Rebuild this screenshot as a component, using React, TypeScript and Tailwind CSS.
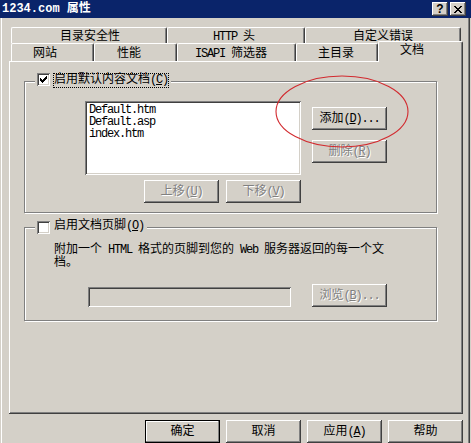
import React from 'react';

// classic win2k bevels
const raised = 'shadow-[inset_-1px_-1px_#404040,inset_1px_1px_#fff,inset_-2px_-2px_#808080,inset_2px_2px_#d4d0c8]';
const sunken = 'shadow-[inset_1px_1px_#808080,inset_-1px_-1px_#fff,inset_2px_2px_#404040,inset_-2px_-2px_#d4d0c8]';
const etched = 'border border-[#808080] shadow-[inset_1px_1px_#fff,1px_1px_#fff]';
const tabBase =
  'shrink-0 border-l border-t border-r border-white border-r-[#404040] rounded-t-[2px] shadow-[inset_-1px_0_#808080] leading-[12px] whitespace-nowrap';
const mono = "font-['Liberation_Mono',monospace] tracking-[-1.2px]";

const M = ({ children }: { children: React.ReactNode }) => <span className={mono}>{children}</span>;

const U = ({ children }: { children: React.ReactNode }) => <span className="underline">{children}</span>;

const Btn = ({
  children,
  disabled,
  def,
  className = '',
}: {
  children: React.ReactNode;
  disabled?: boolean;
  def?: boolean;
  className?: string;
}) => (
  <button
    type="button"
    className={`w-[75px] h-[23px] shrink-0 flex items-center justify-center text-[12px] leading-[12px] bg-[#d4d0c8] ${
      def ? 'border border-black shadow-[inset_-1px_-1px_#808080,inset_1px_1px_#fff]' : raised
    } ${disabled ? 'text-[#808080] [text-shadow:1px_1px_0_#fff]' : 'text-black'} ${className}`}
  >
    {children}
  </button>
);

const checkTops = [5, 6, 7, 6, 5, 4, 3];

const Check = ({ checked }: { checked?: boolean }) => (
  <div className={`w-[13px] h-[13px] shrink-0 bg-white ${sunken}`}>
    {checked && (
      <svg width="13" height="13" viewBox="0 0 13 13" shapeRendering="crispEdges">
        {checkTops.map((t, i) => (
          <rect key={i} x={3 + i} y={t} width="1" height="3" fill="#000" />
        ))}
      </svg>
    )}
  </div>
);

const closeRows: number[][][] = [
  [[0, 2], [6, 2]],
  [[1, 2], [5, 2]],
  [[2, 4]],
  [[3, 2]],
  [[2, 4]],
  [[1, 2], [5, 2]],
  [[0, 2], [6, 2]],
];

const backTabs = [
  { label: <>目录安全性</>, cls: 'w-[156px] pl-[48px]' },
  { label: <><M>HTTP </M>头</>, cls: 'w-[138px] pl-[45px]' },
  { label: <>自定义错误</>, cls: 'w-[156px] pl-[47px]' },
];

const frontTabs = [
  { label: <>网站</>, cls: 'w-[83px] pl-[21px]' },
  { label: <>性能</>, cls: 'w-[83px] pl-[22px]' },
  { label: <><M>ISAPI </M>筛选器</>, cls: 'w-[119px] pl-[17px]' },
  { label: <>主目录</>, cls: 'w-[82px] pl-[21px]' },
];

const docs = ['Default.htm', 'Default.asp', 'index.htm'];

export default function App() {
  return (
    <div className="relative w-[471px] h-[443px] overflow-hidden bg-[#d4d0c8] text-[12px] text-black font-['Liberation_Mono','Noto_Sans_CJK_SC',monospace]">
      {/* title bar */}
      <div className="h-[18px] bg-[#0a246a] flex items-center pl-[2px]">
        <span className="text-white font-bold leading-[14px]">1234.com 属性</span>
        <div className="ml-auto mr-[5px] flex gap-[2px]">
          <div
            className={`w-[16px] h-[14px] bg-[#d4d0c8] ${raised} flex items-center justify-center font-['Liberation_Sans',sans-serif] font-bold text-[12px] leading-none`}
          >
            ?
          </div>
          <div className={`w-[16px] h-[14px] bg-[#d4d0c8] ${raised} flex items-center justify-center`}>
            <svg width="8" height="7" viewBox="0 0 8 7" shapeRendering="crispEdges">
              {closeRows.map((row, y) =>
                row.map(([x, w], k) => <rect key={`${y}-${k}`} x={x} y={y} width={w} height="1" fill="#000" />)
              )}
            </svg>
          </div>
        </div>
      </div>

      {/* dialog body */}
      <div className="h-[425px] pt-[9px] shadow-[inset_1px_0_#d4d0c8,inset_2px_0_#fff,inset_-1px_0_#d4d0c8,inset_-2px_0_#404040,inset_-3px_0_#808080]">
        <div className="pl-[11px] flex h-[16px]">
          {backTabs.map((t, i) => (
            <div key={i} className={`${tabBase} h-[16px] pt-[3px] ${t.cls}`}>
              {t.label}
            </div>
          ))}
        </div>
        <div className="pl-[11px] flex items-start h-[18px]">
          {frontTabs.map((t, i) => (
            <div key={i} className={`${tabBase} h-[18px] pt-[4px] ${t.cls}`}>
              {t.label}
            </div>
          ))}
          <div className={`${tabBase} relative z-10 -mt-[2px] h-[21px] w-[85px] pl-[21px] pt-[3px] bg-[#d4d0c8]`}>
            文档
          </div>
        </div>

        {/* tab page */}
        <div className="ml-[9px] w-[454px] h-[353px] pl-[15px] flex flex-col shadow-[inset_-1px_-1px_#404040,inset_1px_1px_#fff,inset_-2px_-2px_#808080]">
          <div className={`mt-[20px] w-[413px] h-[132px] shrink-0 ${etched}`}>
            <div className="ml-[10px] -mt-[9px] h-[15px] w-fit px-[2px] bg-[#d4d0c8] flex items-start">
              <Check checked />
              <span className="ml-[3px] border border-dotted border-black leading-[13px] whitespace-nowrap">
                启用默认内容文档<M>(<U>C</U>)</M>
              </span>
            </div>
            <div className="flex mt-[13px]">
              <div className={`ml-[60px] w-[216px] h-[74px] shrink-0 bg-white pl-[4px] pt-[3px] ${sunken}`}>
                {docs.map((d) => (
                  <div key={d} className={`h-[12px] leading-[12px] overflow-hidden ${mono}`}>
                    {d}
                  </div>
                ))}
              </div>
              <div className="ml-[11px] mt-[6px] flex flex-col gap-[10px]">
                <Btn>
                  添加<M>(<U>D</U>)...</M>
                </Btn>
                <Btn disabled>
                  删除<M>(<U>R</U>)</M>
                </Btn>
              </div>
            </div>
            <div className="flex ml-[119px] mt-[5px] gap-[7px]">
              <Btn disabled>
                上移<M>(<U>U</U>)</M>
              </Btn>
              <Btn disabled>
                下移<M>(<U>V</U>)</M>
              </Btn>
            </div>
          </div>

          <div className={`mt-[14px] w-[413px] h-[94px] shrink-0 ${etched}`}>
            <div className="ml-[10px] -mt-[9px] h-[15px] w-fit px-[2px] bg-[#d4d0c8] flex items-end">
              <Check />
              <span className="ml-[4px] pr-[1px] leading-[13px] whitespace-nowrap self-center">
                启用文档页脚<M>(<U>O</U>)</M>
              </span>
            </div>
            <div className="ml-[29px] mt-[10px] leading-[13px] whitespace-nowrap">
              附加一个<M>{' HTML '}</M>格式的页脚到您的<M>{' Web '}</M>服务器返回的每一个文
              <br />
              档。
            </div>
            <div className="flex items-end mt-[14px]">
              <div className={`ml-[63px] w-[203px] h-[20px] bg-[#d4d0c8] ${sunken}`} />
              <Btn disabled className="ml-[21px]">
                浏览<M>(<U>B</U>)...</M>
              </Btn>
            </div>
          </div>
        </div>

        {/* dialog buttons */}
        <div className="mt-[6px] flex justify-end gap-[6px] pr-[8px]">
          <Btn def>确定</Btn>
          <Btn>取消</Btn>
          <Btn>
            应用<M>(<U>A</U>)</M>
          </Btn>
          <Btn>帮助</Btn>
        </div>
      </div>

      {/* red annotation circle */}
      <svg className="absolute left-[275px] top-[75px] pointer-events-none" width="134" height="73" viewBox="0 0 134 73">
        <ellipse cx="67" cy="36.5" rx="66" ry="35.5" fill="none" stroke="#d22a2f" strokeWidth="1.1" />
      </svg>
    </div>
  );
}
